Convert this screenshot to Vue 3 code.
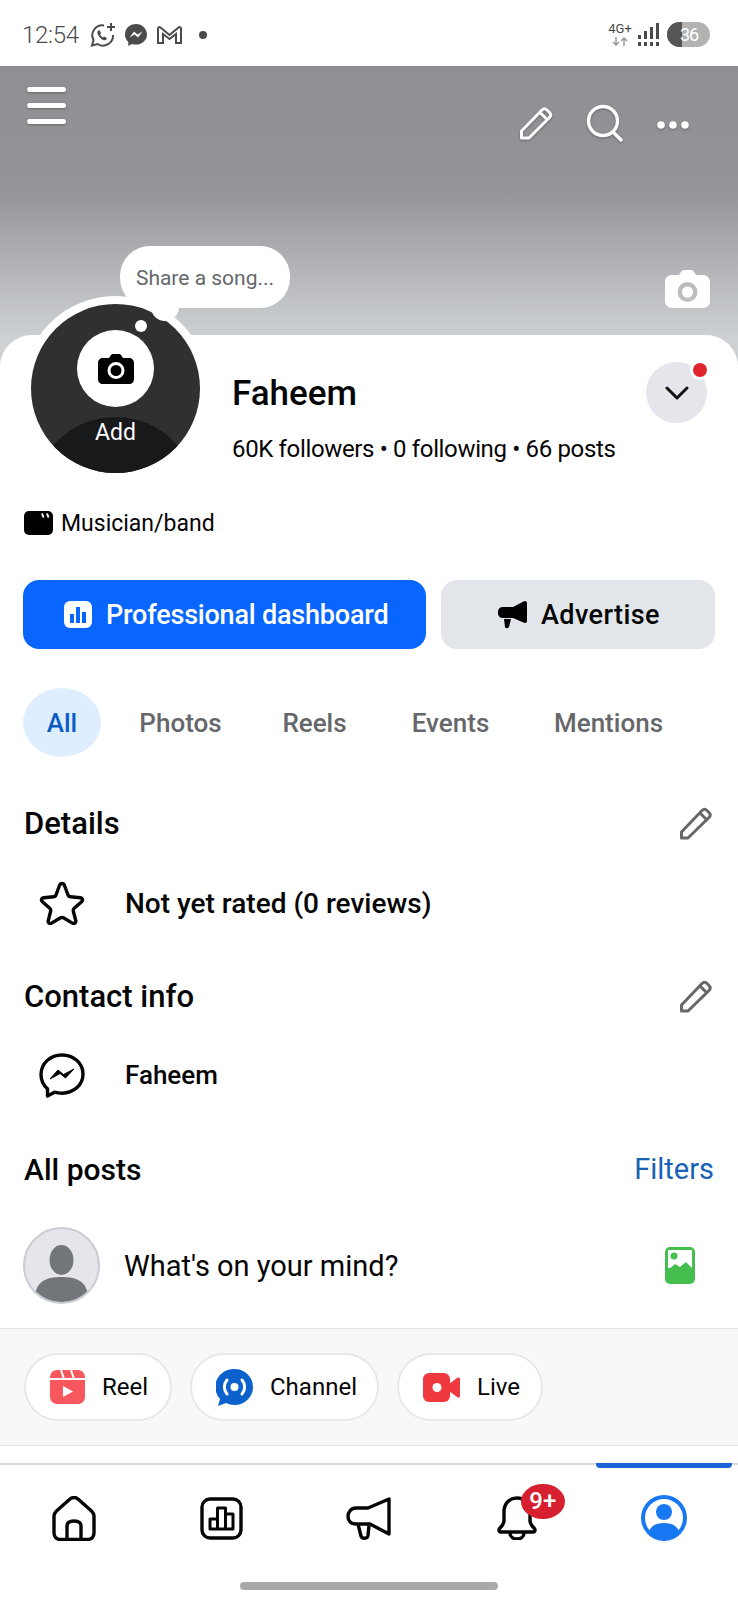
<template>
  <div class="page">
    <!-- status bar -->
    <div class="status-bar">
      <span class="clock">12:54</span>
      <svg class="st-icon" width="26" height="25" viewBox="0 0 26 25" fill="none" stroke="#4b4b4b" stroke-width="2">
        <path d="M14 3.500A10 10 0 0 0 3.500 18L2 23.500l5.600-1.500A10 10 0 0 0 23 13" />
        <path d="M8 8.500c-1 1-1 3 1 6s5 4.500 7 3.500l1-2-3-1.500-1 1c-1-.5-2.500-2-3-3l1-1-1-3z" fill="#4b4b4b" stroke="none" />
        <path d="M21 1v8M17 5h8" stroke-width="2" />
      </svg>
      <svg class="st-icon" width="24" height="24" viewBox="0 0 24 24">
        <path d="M12 1C5.600 1 1 5.600 1 11.500c0 3 1.200 5.600 3.300 7.500v4l3.700-2c1.200.4 2.600.6 4 .6 6.400 0 11-4.600 11-10.100S18.400 1 12 1z" fill="#4b4b4b" />
        <path d="M5.500 14.500l4.500-6 3.500 3 5-3-4.500 6-3.500-3z" fill="#fff" />
      </svg>
      <svg class="st-icon gm" width="27" height="20" viewBox="0 0 27 20" fill="none" stroke="#4b4b4b" stroke-width="2">
        <path d="M2 18V3.500C2 2 3.500 1.500 4.500 2.500L13.500 10l9-7.500c1-1 2.500-.5 2.500 1V18h-5V9l-6.500 5L7 9v9z" />
      </svg>
      <span class="st-dot"></span>
      <div class="st-right">
        <div class="net">
          <span class="net-label">4G+</span>
          <svg width="16" height="9" viewBox="0 0 16 9" fill="none" stroke="#9a9a9a" stroke-width="1.500">
            <path d="M4 0v8M1 5l3 3 3-3M12 9V1M9 4l3-3 3 3" />
          </svg>
        </div>
        <svg width="22" height="23" viewBox="0 0 22 23" fill="#4b4b4b">
          <rect x="0" y="12" width="3" height="4" /><rect x="6" y="8" width="3" height="8" />
          <rect x="12" y="4" width="3" height="12" /><rect x="18" y="0" width="3" height="16" />
          <rect x="0" y="19" width="3" height="4" /><rect x="6" y="19" width="3" height="4" />
          <rect x="12" y="19" width="3" height="4" /><rect x="18" y="19" width="3" height="4" />
        </svg>
        <div class="battery"><span class="battery-fill"></span><span class="battery-text">36</span></div>
      </div>
    </div>

    <!-- cover -->
    <div class="cover">
      <div class="burger"><span></span><span></span><span></span></div>
      <div class="cover-actions">
        <svg width="34" height="34" viewBox="0 0 34 34" fill="none" stroke="#fff" stroke-width="3" stroke-linejoin="round">
          <path d="M2.500 25L23 4c1.500-1.500 3.500-1.500 5 0l2.500 2.500c1.500 1.500 1.500 3.500 0 5L10 32l-7.500 0z" />
          <path d="M21 6.500l7.500 7.500" />
        </svg>
        <svg width="38" height="38" viewBox="0 0 38 38" fill="none" stroke="#fff" stroke-width="3.400" stroke-linecap="round">
          <circle cx="17" cy="17" r="14.500" />
          <path d="M27 28l8 8" />
        </svg>
        <svg class="dots" width="32" height="8" viewBox="0 0 32 8" fill="#fff">
          <circle cx="4" cy="4" r="3.800" /><circle cx="16" cy="4" r="3.800" /><circle cx="28" cy="4" r="3.800" />
        </svg>
      </div>
      <div class="bubble">Share a song...</div>
      <svg class="cover-camera" width="45" height="38" viewBox="0 0 45 38">
        <path fill-rule="evenodd" fill="#fff" d="M7 5h7l2-3c.7-1 1.500-2 3-2h7c1.500 0 2.300 1 3 2l2 3h7c4 0 7 3 7 7v19c0 4-3 7-7 7H7c-4 0-7-3-7-7V12c0-4 3-7 7-7zm15.500 7a10 10 0 1 0 0 20 10 10 0 0 0 0-20zm0 5a5.200 5.200 0 1 1 0 10.400 5.200 5.200 0 0 1 0-10.400z" />
        <circle cx="22.500" cy="22" r="5.500" fill="#fff" />
      </svg>
    </div>

    <!-- white sheet -->
    <div class="sheet">
      <div class="profile">
        <div class="avatar-ring">
          <div class="avatar">
            <div class="avatar-cam">
              <svg width="36" height="30" viewBox="0 0 36 30">
                <path fill-rule="evenodd" fill="#000" d="M5 4h6l2-3c.5-.7 1-1 2-1h6c1 0 1.500.3 2 1l2 3h6c3 0 5 2 5 5v16c0 3-2 5-5 5H5c-3 0-5-2-5-5V9c0-3 2-5 5-5zm13 4a8.500 8.500 0 1 0 0 17 8.500 8.500 0 0 0 0-17zm0 3a5.500 5.500 0 1 1 0 11 5.500 5.500 0 0 1 0-11z" />
              </svg>
            </div>
            <div class="avatar-add">Add</div>
          </div>
          <span class="notch"></span>
          <span class="notch-dot"></span>
        </div>
        <div class="info">
          <div class="name">Faheem</div>
          <div class="stats">60K followers • 0 following • 66 posts</div>
        </div>
        <div class="chevron-btn">
          <svg width="24" height="14" viewBox="0 0 24 14" fill="none" stroke="#111" stroke-width="3" stroke-linecap="round" stroke-linejoin="round">
            <path d="M2 2l10 10L22 2" />
          </svg>
          <span class="red-dot"></span>
        </div>
      </div>

      <div class="category">
        <svg width="29" height="24" viewBox="0 0 29 24">
          <rect width="29" height="24" rx="5" fill="#000" />
          <path d="M18 2.500l1.500 4M23 2.500l1.500 4" stroke="#fff" stroke-width="2" />
        </svg>
        <span>Musician/band</span>
      </div>

      <div class="actions">
        <div class="btn primary">
          <svg width="28" height="27" viewBox="0 0 28 27">
            <rect width="28" height="27" rx="6" fill="#fff" />
            <path d="M6 13h4v9H6zM12 6h4v16h-4zM18 11h4v11h-4z" fill="#0866ff" />
          </svg>
          <span>Professional dashboard</span>
        </div>
        <div class="btn secondary">
          <svg width="29" height="28" viewBox="0 0 29 28" fill="#000">
            <path d="M27 0c1 0 2 1 2 2v18c0 1-1 2-2 2-.5 0-1-.2-1.500-.5L15 17H5c-3 0-5-2-5-4.500v-2C0 8 2 6 5 6h10L25.500.5C26 .2 26.500 0 27 0z" />
            <path d="M6 18h7l-2 8c-.4 1.500-4 1.500-4 0z" />
          </svg>
          <span>Advertise</span>
        </div>
      </div>

      <div class="tabs">
        <div v-for="(tab, i) in tabs" :key="tab" class="tab" :class="{ active: i === 0 }">{{ tab }}</div>
      </div>

      <div class="section-head first">
        <span>Details</span>
        <svg class="edit" width="33" height="33" viewBox="0 0 33 33" fill="none" stroke="#65676b" stroke-width="3" stroke-linejoin="round">
          <path d="M2.500 25L23 3.500c1.500-1.500 3.500-1.500 5 0l2 2c1.500 1.500 1.500 3.500 0 5L9 31H2.500z" />
          <path d="M21 6l7 7" />
        </svg>
      </div>
      <div class="row first-row">
        <svg width="46" height="44" viewBox="0 0 46 44" fill="none" stroke="#050505" stroke-width="3.400" stroke-linejoin="round">
          <path d="M23 2.500c1 0 2 .7 2.500 2L29 14c.4 1 1.200 1.600 2.300 1.700l10 1c2.300.3 3 2.500 1.300 4l-7.400 6.500c-.8.7-1.100 1.700-.9 2.800l2.400 9.500c.6 2.200-1.400 3.700-3.300 2.600l-9-5.300c-.9-.5-1.900-.5-2.800 0l-9 5.300c-1.900 1.100-3.900-.4-3.300-2.600l2.400-9.500c.2-1.100-.1-2.100-.9-2.800l-7.400-6.500c-1.700-1.500-1-3.700 1.300-4l10-1c1.100-.1 1.900-.7 2.300-1.700l3.500-9.500c.5-1.300 1.500-2 2.500-2z" />
        </svg>
        <span>Not yet rated (0 reviews)</span>
      </div>

      <div class="section-head second">
        <span>Contact info</span>
        <svg class="edit" width="33" height="33" viewBox="0 0 33 33" fill="none" stroke="#65676b" stroke-width="3" stroke-linejoin="round">
          <path d="M2.500 25L23 3.500c1.500-1.500 3.500-1.500 5 0l2 2c1.500 1.500 1.500 3.500 0 5L9 31H2.500z" />
          <path d="M21 6l7 7" />
        </svg>
      </div>
      <div class="row second-row">
        <svg width="46" height="45" viewBox="0 0 46 45" fill="none" stroke="#050505" stroke-width="3.400" stroke-linejoin="round">
          <path d="M23 2C11 2 2 10.500 2 21.500c0 5.800 2.500 10.800 6.500 14.300V43l7-3.800c2.300.7 4.800 1 7.500 1 12 0 21-8.500 21-19.200C44 10.500 35 2 23 2z" />
          <path d="M11 26l8-9 5.500 4.500L35 16l-8.500 9-5.500-4.500z" fill="#050505" stroke-width="1" />
        </svg>
        <span>Faheem</span>
      </div>

      <div class="section-head third">
        <span>All posts</span>
        <span class="filters">Filters</span>
      </div>

      <div class="composer">
        <div class="ph-avatar">
          <svg width="77" height="77" viewBox="0 0 77 77">
            <ellipse cx="38.500" cy="33" rx="12" ry="15" fill="#72757a" />
            <path d="M12 68c2-14 12-18 26.500-18S63 54 65 68c-6 6-16 9-26.500 9S18 74 12 68z" fill="#72757a" />
          </svg>
        </div>
        <span class="composer-text">What's on your mind?</span>
        <svg class="photo" width="30" height="37" viewBox="0 0 30 37">
          <rect width="30" height="37" rx="5" fill="#45bd4f" />
          <rect x="3" y="3" width="24" height="18" fill="#fff" />
          <circle cx="9" cy="9" r="3.500" fill="#45bd4f" />
          <path d="M3 23l7-6 5 3 6-5 6 6v4H3z" fill="#45bd4f" />
        </svg>
      </div>

      <div class="band">
        <div v-for="pill in pills" :key="pill" class="pill" :class="'pill-' + pill.toLowerCase()">
          <svg v-if="pill === 'Reel'" width="35" height="34" viewBox="0 0 35 34">
            <rect width="35" height="34" rx="7" fill="#f9575e" />
            <path d="M0 9h35M11 0l3 9M21 0l3 9" stroke="#fff" stroke-width="2" />
            <path d="M13 16l10 5.500-10 5.500z" fill="#fff" />
          </svg>
          <svg v-else-if="pill === 'Channel'" width="37" height="37" viewBox="0 0 37 37" fill="none">
            <path d="M18.500 0a18.500 18 0 0 1 0 36c-3 0-6-.7-8.500-2l-8 3 2-7A18.500 18 0 0 1 18.500 0z" fill="#0b62cc" />
            <path d="M11 11c-3.500 4-3.500 10 0 14M26 11c3.500 4 3.500 10 0 14" stroke="#fff" stroke-width="3" stroke-linecap="round" />
            <circle cx="18.500" cy="18" r="4" fill="#fff" />
          </svg>
          <svg v-else width="37" height="29" viewBox="0 0 37 29">
            <rect width="27" height="29" rx="6" fill="#f0393f" />
            <path d="M26 11l8-6c1.500-1 3-.5 3 1v17c0 1.500-1.500 2-3 1l-8-6z" fill="#f0393f" />
            <circle cx="14" cy="14.500" r="4.500" fill="#fff" />
          </svg>
          <span>{{ pill }}</span>
        </div>
      </div>
    </div>

    <!-- bottom nav -->
    <div class="nav">
      <span class="nav-indicator"></span>
      <div class="nav-items">
        <div class="nav-item">
          <svg width="44" height="45" viewBox="0 0 44 45" fill="none" stroke="#050505" stroke-width="3.400" stroke-linejoin="round">
            <path d="M2 20c0-2 1-3.500 2.500-5L18 3c2.500-2 5.500-2 8 0l13.500 12c1.500 1.500 2.500 3 2.500 5v17c0 4-2.500 6.500-6.500 6.500h-27C4.500 43.500 2 41 2 37z" />
            <path d="M15 43V30c0-3 2.500-5 7-5s7 2 7 5v13" />
          </svg>
        </div>
        <div class="nav-item">
          <svg width="43" height="43" viewBox="0 0 43 43" fill="none" stroke="#050505" stroke-width="3.400" stroke-linejoin="round">
            <rect x="2" y="2" width="39" height="39" rx="8" />
            <path d="M10 32V22h7.500v10zM17.500 32V11h8v21zM25.500 32V17H33v15z" stroke-width="3" />
          </svg>
        </div>
        <div class="nav-item">
          <svg width="46" height="45" viewBox="0 0 46 45" fill="none" stroke="#050505" stroke-width="3.400" stroke-linejoin="round">
            <path d="M43 3v35L24 28H10c-5 0-8-3-8-7.500S5 12 10 12h12z" />
            <path d="M12 28l3 12c.8 3 6.500 3 7-.5l1-10" />
          </svg>
        </div>
        <div class="nav-item">
          <svg width="42" height="44" viewBox="0 0 42 44" fill="none" stroke="#050505" stroke-width="3.400" stroke-linejoin="round">
            <path d="M21 2C13 2 8 8 8 16v9c0 3-2 5-4 7-1.500 1.500-1.500 4 1 4h32c2.500 0 2.500-2.500 1-4-2-2-4-4-4-7v-9C34 8 29 2 21 2z" />
            <path d="M14 37c0 8 14 8 14 0" />
          </svg>
          <span class="nav-badge">9+</span>
        </div>
        <div class="nav-item">
          <svg width="46" height="46" viewBox="0 0 46 46">
            <circle cx="23" cy="23" r="21" fill="none" stroke="#1877f2" stroke-width="4" />
            <circle cx="23" cy="17" r="8" fill="#1877f2" />
            <path d="M8 36c3-6 8-8 15-8s12 2 15 8c-4 5-9 8-15 8s-11-3-15-8z" fill="#1877f2" />
          </svg>
        </div>
      </div>
      <div class="home-bar"></div>
    </div>
  </div>
</template>

<script setup>
const tabs = ['All', 'Photos', 'Reels', 'Events', 'Mentions']
const pills = ['Reel', 'Channel', 'Live']
</script>

<style>
body {
  background: #fff;
}
</style>

<style scoped>
.page {
  width: 738px;
  height: 1600px;
  display: flex;
  flex-direction: column;
  overflow: hidden;
  background: #fff;
  color: #050505;
  font-family: Roboto, "Liberation Sans", sans-serif;
}

/* status bar */
.status-bar {
  height: 66px;
  flex-shrink: 0;
  display: flex;
  align-items: center;
  padding: 3px 28px 0 22px;
  box-sizing: border-box;
}

.clock {
  width: 58px;
  font-size: 24px;
  font-weight: 300;
  letter-spacing: -0.3px;
  color: #4b4b4b;
  margin-right: 10px;
}

.st-icon {
  margin-right: 8px;
}

.gm {
  margin-right: 16px;
}

.st-dot {
  width: 8px;
  height: 8px;
  border-radius: 50%;
  background: #4b4b4b;
}

.st-right {
  margin-left: auto;
  display: flex;
  align-items: center;
  gap: 3px;
}

.net {
  width: 30px;
  display: flex;
  flex-direction: column;
  align-items: center;
  gap: 2px;
}

.net-label {
  font-size: 13px;
  line-height: 12px;
  color: #4b4b4b;
}

.battery {
  position: relative;
  width: 43px;
  height: 25px;
  margin-left: 4px;
  border-radius: 13px;
  overflow: hidden;
  background: #b3b3b3;
}

.battery-fill {
  display: block;
  width: 15px;
  height: 100%;
  background: #555;
}

.battery-text {
  position: absolute;
  left: 9px;
  top: 0;
  width: 26px;
  text-align: center;
  line-height: 25px;
  font-size: 18px;
  letter-spacing: -1px;
  color: #fff;
}

/* cover */
.cover {
  position: relative;
  height: 299px;
  flex-shrink: 0;
  background: linear-gradient(#8e8f93 0, #949599 42%, #cfd2d5 92%);
  padding: 21px 49px 0 27px;
  box-sizing: border-box;
  display: flex;
  justify-content: space-between;
  align-items: flex-start;
}

.burger {
  display: flex;
  flex-direction: column;
  gap: 11px;
  filter: drop-shadow(0 1px 1px rgba(0, 0, 0, 0.3));
}

.burger span {
  width: 39px;
  height: 5px;
  border-radius: 3px;
  background: #fff;
}

.cover-actions {
  display: flex;
  align-items: center;
  gap: 33px;
  margin-top: 17px;
  filter: drop-shadow(0 1px 1px rgba(0, 0, 0, 0.3));
}

.dots {
  margin-top: 4px;
}

.bubble {
  position: absolute;
  left: 120px;
  top: 180px;
  width: 170px;
  height: 62px;
  border-radius: 30px;
  background: #fff;
  color: #65676b;
  font-size: 21px;
  line-height: 65px;
  text-align: center;
}

.cover-camera {
  position: absolute;
  left: 665px;
  top: 204px;
}

/* sheet */
.sheet {
  flex: 1;
  margin-top: -30px;
  position: relative;
  background: #fff;
  border-radius: 32px 32px 0 0;
  display: flex;
  flex-direction: column;
}

.profile {
  display: flex;
  align-items: flex-start;
  margin-top: -39px;
  padding: 0 31px 0 23px;
}

.avatar-ring {
  position: relative;
  width: 185px;
  height: 185px;
  flex-shrink: 0;
  padding: 8px;
  box-sizing: border-box;
  border-radius: 50%;
  background: #fff;
}

.avatar {
  position: relative;
  width: 169px;
  height: 169px;
  border-radius: 50%;
  overflow: hidden;
  background: #2f3030;
}

.avatar-cam {
  position: absolute;
  left: 46px;
  top: 26px;
  width: 77px;
  height: 77px;
  border-radius: 50%;
  background: #fff;
  display: flex;
  align-items: center;
  justify-content: center;
}

.avatar-add {
  position: absolute;
  left: 2px;
  top: 113px;
  width: 165px;
  height: 165px;
  border-radius: 50%;
  background: #18191a;
  color: #fff;
  font-size: 23px;
  text-align: center;
  line-height: 32px;
}

.notch {
  position: absolute;
  left: 128px;
  top: -3px;
  width: 28px;
  height: 28px;
  border-radius: 50%;
  background: #fff;
}

.notch-dot {
  position: absolute;
  left: 112px;
  top: 24px;
  width: 12px;
  height: 12px;
  border-radius: 50%;
  background: #fff;
}

.info {
  margin-left: 24px;
  padding-top: 74px;
}

.name {
  font-size: 35px;
  line-height: 48px;
  font-weight: 500;
}

.stats {
  margin-top: 15px;
  font-size: 24px;
  line-height: 32px;
  letter-spacing: -0.35px;
}

.chevron-btn {
  position: relative;
  width: 61px;
  height: 61px;
  margin-top: 66px;
  margin-left: auto;
  border-radius: 50%;
  background: #e4e6eb;
  display: flex;
  align-items: center;
  justify-content: center;
}

.red-dot {
  position: absolute;
  right: -3px;
  top: -2px;
  width: 14px;
  height: 14px;
  border: 3px solid #fff;
  border-radius: 50%;
  background: #e0242f;
}

.category {
  height: 32px;
  margin-top: 26px;
  padding-left: 24px;
  display: flex;
  align-items: center;
  gap: 8px;
  font-size: 23px;
}

.actions {
  margin-top: 41px;
  padding: 0 23px;
  display: flex;
  gap: 15px;
}

.btn {
  height: 69px;
  border-radius: 16px;
  display: flex;
  align-items: center;
  gap: 14px;
  font-size: 27px;
  font-weight: 500;
  letter-spacing: -0.2px;
}

.primary {
  width: 403px;
  padding-left: 41px;
  box-sizing: border-box;
  background: #0866ff;
  color: #fff;
}

.secondary {
  width: 274px;
  padding-left: 57px;
  box-sizing: border-box;
  background: #e2e5ea;
  letter-spacing: 0.4px;
}

.tabs {
  margin-top: 39px;
  padding-left: 23px;
  display: grid;
  grid-template-columns: 78px 159px 109px 163px 153px;
  height: 69px;
}

.tab {
  display: flex;
  align-items: center;
  justify-content: center;
  font-size: 26px;
  font-weight: 500;
  color: #65676b;
}

.tab.active {
  border-radius: 50%;
  background: #dfeeff;
  color: #0b5cc5;
}

.section-head {
  height: 40px;
  padding: 0 26px 0 24px;
  display: flex;
  align-items: center;
  justify-content: space-between;
  font-size: 31px;
  font-weight: 500;
}

.section-head.first {
  margin-top: 46px;
}

.section-head.second {
  margin-top: 50px;
}

.section-head.third {
  margin-top: 51px;
  padding-right: 24px;
  font-size: 30px;
}

.filters {
  font-size: 29px;
  font-weight: 400;
  color: #1a62b5;
}

.row {
  height: 46px;
  padding-left: 39px;
  display: flex;
  align-items: center;
  gap: 40px;
  font-size: 26px;
  font-weight: 500;
}

.first-row {
  margin-top: 37px;
  font-size: 28px;
}

.second-row {
  margin-top: 36px;
}

.composer {
  margin-top: 38px;
  padding: 0 43px 0 23px;
  height: 77px;
  display: flex;
  align-items: center;
}

.ph-avatar {
  width: 77px;
  height: 77px;
  box-sizing: border-box;
  border: 2px solid #c9ccd1;
  border-radius: 50%;
  background: #e4e6eb;
  overflow: hidden;
  display: flex;
  align-items: center;
  justify-content: center;
}

.ph-avatar svg {
  flex-shrink: 0;
}

.composer-text {
  margin-left: 24px;
  font-size: 29px;
}

.photo {
  margin-left: auto;
}

.band {
  margin-top: 24px;
  height: 118px;
  box-sizing: border-box;
  padding: 24px 24px 0;
  display: flex;
  align-items: flex-start;
  gap: 18px;
  background: #f7f8fa;
  border-top: 1px solid #e4e6e9;
  border-bottom: 1px solid #e4e6e9;
}

.pill {
  height: 68px;
  box-sizing: border-box;
  padding-left: 24px;
  display: flex;
  align-items: center;
  gap: 17px;
  border: 2px solid #e6e8eb;
  border-radius: 34px;
  background: #fff;
  font-size: 24px;
}

.pill-reel {
  width: 148px;
}

.pill-channel {
  width: 189px;
}

.pill-live {
  width: 146px;
}

/* nav */
.nav {
  position: relative;
  height: 137px;
  flex-shrink: 0;
  box-sizing: border-box;
  border-top: 2px solid #d8dade;
  background: #fff;
}

.nav-indicator {
  position: absolute;
  left: 596px;
  top: -2px;
  width: 136px;
  height: 5px;
  border-radius: 0 0 4px 4px;
  background: #1b64d8;
}

.nav-items {
  margin-top: 30px;
  height: 45px;
  display: grid;
  grid-template-columns: repeat(5, 1fr);
}

.nav-item {
  position: relative;
  display: flex;
  align-items: center;
  justify-content: center;
}

.nav-badge {
  position: absolute;
  left: 78px;
  top: -11px;
  width: 44px;
  height: 35px;
  border-radius: 50%;
  background: #d6202f;
  color: #fff;
  font-size: 24px;
  font-weight: 500;
  line-height: 35px;
  text-align: center;
}

.home-bar {
  width: 258px;
  height: 8px;
  margin: 42px auto 0;
  border-radius: 4px;
  background: #a9a9a9;
}
</style>
